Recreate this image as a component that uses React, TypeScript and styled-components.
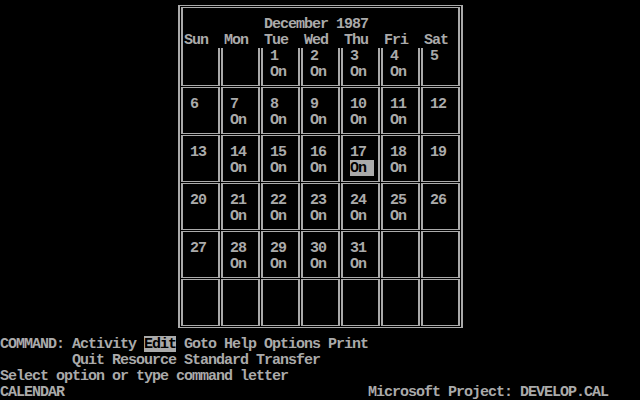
import React from "react";
import styled, { createGlobalStyle } from "styled-components";

const FG = "#aaaaaa";

const Global = createGlobalStyle`
  html, body { margin: 0; padding: 0; background: #000; }
  body { width: 640px; height: 400px; overflow: hidden; }
`;

const Screen = styled.div`
  width: 640px;
  height: 400px;
  background: #000;
  color: ${FG};
  font-family: "Liberation Mono", "DejaVu Sans Mono", monospace;
  font-size: 15px;
  font-weight: 700;
  letter-spacing: -1px;
  line-height: 18px;
  white-space: pre;
  display: flex;
  flex-direction: column;
`;

const CalendarArea = styled.div`
  height: 336px;
  box-sizing: border-box;
  padding: 5px 0 0 178px;
`;

const OuterFrame = styled.div`
  width: 285px;
  height: 323px;
  box-sizing: border-box;
  border: solid ${FG};
  border-width: 1px 2px;
  padding: 1px;
  display: flex;
  flex-direction: column;
`;

const Header = styled.div`
  height: 41px;
  box-sizing: border-box;
  border: solid ${FG};
  border-width: 1px 2px 0 2px;
  padding: 8px 0 0 1px;
`;

const MonthTitle = styled.div`
  height: 16px;
  padding-left: 80px;
`;

const DayNames = styled.div`
  display: grid;
  grid-template-columns: repeat(6, 40px) 1fr;
  grid-template-rows: 16px;
  height: 16px;
`;

const WeekGrid = styled.div`
  display: grid;
  grid-template-columns: repeat(7, 39px);
  grid-template-rows: 38px repeat(5, 47px);
  gap: 1px;
`;

const Cell = styled.div<{ $first: boolean }>`
  box-sizing: border-box;
  border: solid ${FG};
  border-width: ${(p) => (p.$first ? "0 2px 1px 2px" : "1px 2px")};
  padding: ${(p) => (p.$first ? "0" : "8px")} 0 0 7px;
`;

const Line = styled.div`
  height: 16px;
`;

const Inverse = styled.span`
  display: inline-block;
  height: 16px;
  vertical-align: top;
  background: ${FG};
  color: #000;
`;

const StatusRow = styled.div`
  height: 16px;
  display: flex;
  justify-content: space-between;
  padding-right: 32px;
`;

const days = ["Sun", "Mon", "Tue", "Wed", "Thu", "Fri", "Sat"];

type CellData = { day: number | null; on: boolean };

const buildCells = (): CellData[] => {
  const cells: CellData[] = [];
  const startDow = 2; // Dec 1 1987 is a Tuesday
  for (let i = 0; i < 42; i++) {
    const d = i - startDow + 1;
    if (d >= 1 && d <= 31) {
      const dow = i % 7;
      cells.push({ day: d, on: dow >= 1 && dow <= 5 });
    } else {
      cells.push({ day: null, on: false });
    }
  }
  return cells;
};

export default function App() {
  const cells = buildCells();
  return (
    <>
      <Global />
      <Screen>
        <CalendarArea>
          <OuterFrame>
            <Header>
              <MonthTitle>December 1987</MonthTitle>
              <DayNames>
                {days.map((d) => (
                  <span key={d}>{d}</span>
                ))}
              </DayNames>
            </Header>
            <WeekGrid>
              {cells.map((c, i) => (
                <Cell key={i} $first={i < 7}>
                  <Line>{c.day ?? ""}</Line>
                  <Line>
                    {c.on ? (c.day === 17 ? <Inverse>{"On "}</Inverse> : "On") : ""}
                  </Line>
                </Cell>
              ))}
            </WeekGrid>
          </OuterFrame>
        </CalendarArea>
        <Line>
          {"COMMAND: Activity "}
          <Inverse>Edit</Inverse>
          {" Goto Help Options Print"}
        </Line>
        <Line>{"         Quit Resource Standard Transfer"}</Line>
        <Line>Select option or type command letter</Line>
        <StatusRow>
          <span>CALENDAR</span>
          <span>Microsoft Project: DEVELOP.CAL</span>
        </StatusRow>
      </Screen>
    </>
  );
}
